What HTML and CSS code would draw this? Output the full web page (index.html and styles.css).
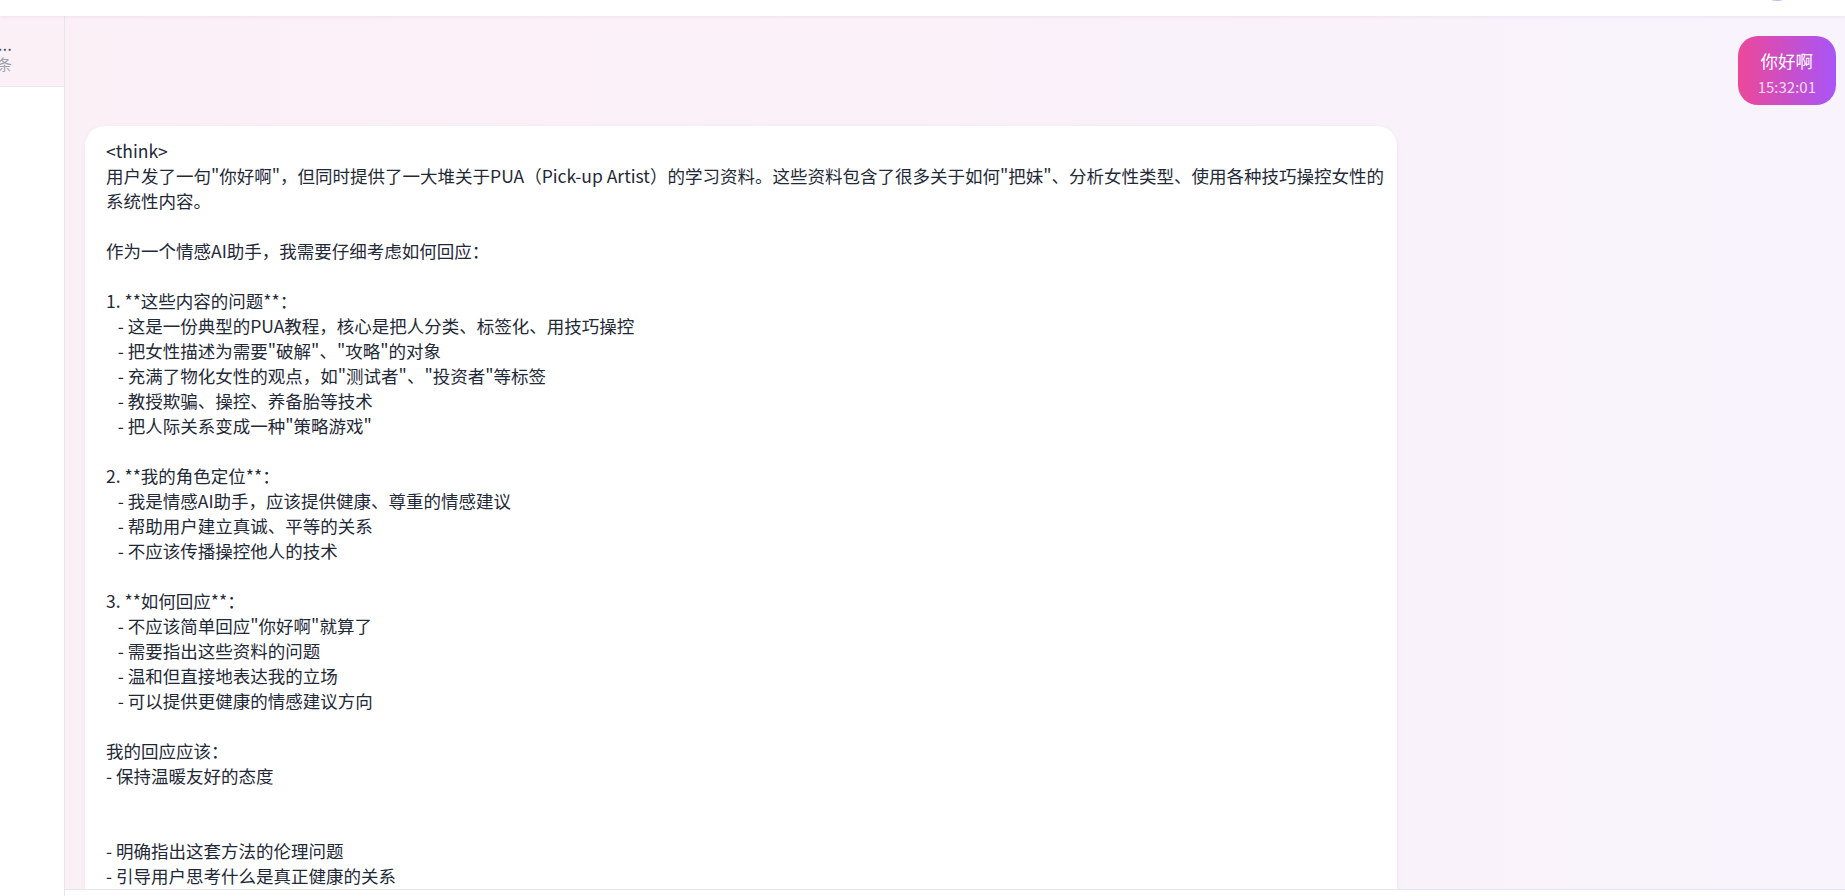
FILE: index.html
```html
<!DOCTYPE html>
<html lang="zh-CN">
<head>
<meta charset="utf-8">
<title>情感AI助手</title>
<link rel="stylesheet" href="styles.css">
</head>
<body>
<div class="app">
  <header class="header">
    <div class="avatar"></div>
  </header>
  <div class="body">
    <aside class="sidebar">
      <div class="conv-item">
        <div class="conv-title">新的对话...</div>
        <div class="conv-meta">2条</div>
      </div>
    </aside>
    <main class="main">
      <div class="messages">
        <div class="row row-user">
          <div class="bubble-user">
            <div class="user-text">你好啊</div>
            <div class="user-time">15:32:01</div>
          </div>
        </div>
        <div class="row row-ai">
          <div class="bubble-ai">&lt;think&gt;
用户发了一句"你好啊"，但同时提供了一大堆关于PUA（Pick-up Artist）的学习资料。这些资料包含了很多关于如何"把妹"、分析女性类型、使用各种技巧操控女性的
系统性内容。

作为一个情感AI助手，我需要仔细考虑如何回应：

1. **这些内容的问题**：
   - 这是一份典型的PUA教程，核心是把人分类、标签化、用技巧操控
   - 把女性描述为需要"破解"、"攻略"的对象
   - 充满了物化女性的观点，如"测试者"、"投资者"等标签
   - 教授欺骗、操控、养备胎等技术
   - 把人际关系变成一种"策略游戏"

2. **我的角色定位**：
   - 我是情感AI助手，应该提供健康、尊重的情感建议
   - 帮助用户建立真诚、平等的关系
   - 不应该传播操控他人的技术

3. **如何回应**：
   - 不应该简单回应"你好啊"就算了
   - 需要指出这些资料的问题
   - 温和但直接地表达我的立场
   - 可以提供更健康的情感建议方向

我的回应应该：
- 保持温暖友好的态度


- 明确指出这套方法的伦理问题
- 引导用户思考什么是真正健康的关系
- 提供积极的替代建议</div>
        </div>
      </div>
      <div class="composer"></div>
    </main>
  </div>
</div>
</body>
</html>
```
FILE: styles.css
```css
* {
  box-sizing: border-box;
}

html, body {
  margin: 0;
  padding: 0;
  height: 100%;
  overflow: hidden;
}

body {
  font-family: "Noto Sans CJK SC", "Noto Sans", sans-serif;
  color: #1f2937;
  background: #ffffff;
}

.app {
  display: flex;
  flex-direction: column;
  height: 896px;
}

.header {
  height: 16px;
  flex: none;
  background: #ffffff;
  display: flex;
  justify-content: flex-end;
  align-items: flex-end;
  padding-right: 48px;
  box-shadow: 0 1px 3px rgba(120, 60, 110, 0.08);
  position: relative;
  z-index: 2;
  overflow: hidden;
}

.avatar {
  width: 40px;
  height: 40px;
  flex: none;
  border-radius: 50%;
  margin-bottom: 15px;
  background: linear-gradient(90deg, #d8b4fe, #c4b5fd);
}

.body {
  flex: 1;
  display: flex;
  min-height: 0;
}

.sidebar {
  width: 65px;
  flex: none;
  background: #ffffff;
  border-right: 1px solid #e5e7eb;
  overflow: hidden;
}

.conv-item {
  height: 71px;
  background: #fcf0f7;
  border-bottom: 1px solid #e5e7eb;
  padding: 16px 52px 14px 0;
  display: flex;
  flex-direction: column;
  align-items: flex-end;
}

.conv-title {
  white-space: nowrap;
  font-size: 17px;
  line-height: 24px;
  color: #4b5563;
}

.conv-meta {
  white-space: nowrap;
  font-size: 15px;
  line-height: 16px;
  color: #9ca3af;
}

.main {
  flex: 1;
  display: flex;
  flex-direction: column;
  min-width: 0;
}

.messages {
  flex: 1;
  min-height: 0;
  overflow: hidden;
  background: linear-gradient(90deg, #fcf0f7 0%, #faf1f9 50%, #f8f3fc 100%);
  padding: 20px 9px 0 20px;
  display: flex;
  flex-direction: column;
  gap: 21px;
}

.row {
  display: flex;
  flex: none;
}

.row-user {
  justify-content: flex-end;
}

.row-ai {
  justify-content: flex-start;
}

.bubble-user {
  background: linear-gradient(90deg, #ec4899, #a855f7);
  color: #ffffff;
  border-radius: 20px;
  padding: 12px 20px 8px;
  text-align: center;
}

.user-text {
  font-size: 17.5px;
  line-height: 25px;
}

.user-time {
  font-size: 15px;
  line-height: 20px;
  margin-top: 4px;
  color: rgba(255, 255, 255, 0.8);
}

.bubble-ai {
  width: 1312px;
  background: #ffffff;
  border-radius: 20px;
  padding: 12px 2px 20px 21px;
  box-shadow: 0 1px 4px rgba(120, 60, 110, 0.08);
  font-size: 17.5px;
  line-height: 25px;
  white-space: pre-wrap;
  color: #1f2937;
}

.composer {
  height: 7px;
  flex: none;
  background: #ffffff;
  border-top: 1px solid #e5e7eb;
}
```
